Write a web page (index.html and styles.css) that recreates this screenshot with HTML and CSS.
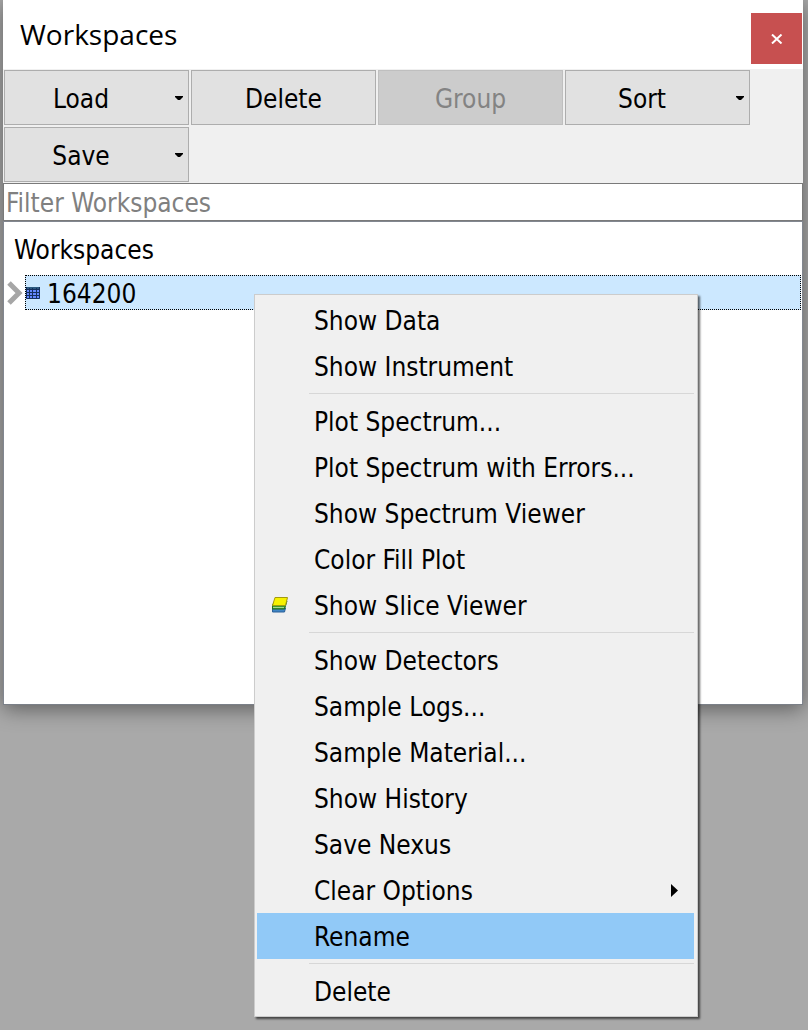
FILE: index.html
```
<!DOCTYPE html>
<html lang="en">
<head>
<meta charset="utf-8">
<title>Workspaces</title>
<link rel="stylesheet" href="styles.css">
</head>
<body>
<main class="window">
  <header class="titlebar">
    <h1 class="title">Workspaces</h1>
    <button class="close" type="button" aria-label="Close">
      <svg width="12" height="10" viewBox="0 0 12 10"><path d="M1 .5 10.500 9.500M10.500 .5 1 9.500" fill="none" stroke="#fff" stroke-width="2"/></svg>
    </button>
  </header>
  <div class="toolbar">
    <button class="tool tool-menu" type="button"><span>Load</span><svg class="caret" viewBox="0 0 8 4"><path d="M0 0h8v1L5 4H3L0 1z"/></svg></button>
    <button class="tool" type="button"><span>Delete</span></button>
    <button class="tool" type="button" disabled><span>Group</span></button>
    <button class="tool tool-menu" type="button"><span>Sort</span><svg class="caret" viewBox="0 0 8 4"><path d="M0 0h8v1L5 4H3L0 1z"/></svg></button>
    <button class="tool tool-menu" type="button"><span>Save</span><svg class="caret" viewBox="0 0 8 4"><path d="M0 0h8v1L5 4H3L0 1z"/></svg></button>
  </div>
  <input class="filter" type="text" placeholder="Filter Workspaces" aria-label="Filter Workspaces">
  <section class="tree">
    <h2 class="tree-head">Workspaces</h2>
    <div class="row">
      <svg class="expander" width="16" height="24" viewBox="0 0 16 24"><path d="M2 2 12 12 2 22" fill="none" stroke="#a6a6a6" stroke-width="5"/></svg>
      <div class="item">
        <svg class="grid-icon" width="14" height="12" viewBox="0 0 14 12"><path fill="#6488ff" d="M0 0h14v12H0z"/><path fill="#2c5a80" d="M0 0h14v2H0z"/><path d="M.5 0v11.500h13V0M3.500 1v11M6.500 1v11M10.500 1v11M0 2.500h14M0 5.500h14M0 8.500h14" fill="none" stroke="#16305e"/></svg>
        <span>164200</span>
      </div>
    </div>
  </section>
</main>
<div class="menu" role="menu">
  <button class="entry" role="menuitem"><span>Show Data</span></button>
  <button class="entry" role="menuitem"><span>Show Instrument</span></button>
  <hr class="rule">
  <button class="entry" role="menuitem"><span>Plot Spectrum...</span></button>
  <button class="entry" role="menuitem"><span>Plot Spectrum with Errors...</span></button>
  <button class="entry" role="menuitem"><span>Show Spectrum Viewer</span></button>
  <button class="entry" role="menuitem"><span>Color Fill Plot</span></button>
  <button class="entry entry-icon" role="menuitem">
    <svg width="18" height="16" viewBox="0 0 18 16"><path d="M1.500 11h13l-1 4h-12z" fill="#3f86c6" stroke="#2a5f97"/><path d="M1.500 8 4 4h12l-2.500 8h-12z" fill="#3d9b2c" stroke="#236b20"/><path d="M2 10.500h11" stroke="#a5d890"/><path d="M4 .5h12.500l-2 8H1.500z" fill="#f7f200" stroke="#a39a10"/></svg>
    <span>Show Slice Viewer</span>
  </button>
  <hr class="rule">
  <button class="entry" role="menuitem"><span>Show Detectors</span></button>
  <button class="entry" role="menuitem"><span>Sample Logs...</span></button>
  <button class="entry" role="menuitem"><span>Sample Material...</span></button>
  <button class="entry" role="menuitem"><span>Show History</span></button>
  <button class="entry" role="menuitem"><span>Save Nexus</span></button>
  <button class="entry entry-sub" role="menuitem"><span>Clear Options</span><svg width="7" height="13" viewBox="0 0 7 13"><path d="M0 0 7 6.500 0 13z"/></svg></button>
  <button class="entry active" role="menuitem"><span>Rename</span></button>
  <hr class="rule">
  <button class="entry" role="menuitem"><span>Delete</span></button>
</div>
</body>
</html>
```
FILE: styles.css
```
* { box-sizing: border-box; }
body {
  margin: 0;
  min-height: 100vh;
  padding: 0 5px 0 3px;
  background: #a9a9a9;
  color: #000;
  font: 26px/34px "DejaVu Sans Condensed", "Noto Sans", sans-serif;
}
button, input { font: inherit; color: inherit; }
.window {
  background: #fff;
  border-bottom: 1px solid #7b8088;
  box-shadow: 0 4px 20px rgba(0, 0, 0, .45);
}
.titlebar {
  display: flex;
  justify-content: space-between;
  align-items: flex-start;
  height: 69px;
  padding: 0 1px 0 17px;
}
.title {
  margin: 16px 0 0;
  font: 28px/36px "Open Sans", sans-serif;
}
.close {
  display: grid;
  place-items: center;
  width: 51px;
  height: 51px;
  margin-top: 13px;
  padding: 0;
  border: 0;
  background: #c75050;
}
.toolbar {
  display: flex;
  flex-wrap: wrap;
  gap: 2px;
  padding: 1px;
  background: #f0f0f0;
}
.tool {
  display: flex;
  align-items: center;
  width: 185px;
  height: 55px;
  padding: 0;
  border: 1px solid #adadad;
  border-radius: 0;
  background: #e1e1e1;
  text-align: center;
}
.tool span { flex: 1; padding-top: 2px; }
.tool:disabled {
  border-color: #bfbfbf;
  background: #ccc;
  color: #838383;
}
.tool-menu { padding: 0 5px 0 18px; }
.tool-menu span { padding-right: 36px; }
.caret { width: 8px; height: 4px; }
.filter {
  display: block;
  width: 100%;
  height: 38px;
  padding: 2px 2px 0;
  border: 1px solid #7a7a7a;
  border-radius: 0;
  background: #fff;
}
.filter::placeholder { color: #808080; opacity: 1; }
.tree {
  min-height: 483px;
  padding: 11px 1px 0 3px;
  border: 1px solid #828790;
  border-bottom: 0;
}
.tree-head { margin: 0 0 8px 7px; font: inherit; }
.row { display: flex; align-items: center; gap: 2px; }
.item {
  display: flex;
  flex: 1;
  align-items: center;
  gap: 7px;
  height: 35px;
  border: 1px dotted #000;
  background: #cce8ff;
}
.item span { padding-top: 2px; }
.menu {
  position: absolute;
  top: 294px;
  left: 254px;
  width: 444px;
  padding: 2px 3px 2px 2px;
  border: 1px solid #ccc;
  background: #f0f0f0;
  box-shadow: 2px 2px 2px rgba(0, 0, 0, .6);
}
.entry {
  display: flex;
  align-items: center;
  width: 100%;
  height: 46px;
  padding: 0 16px 0 57px;
  border: 0;
  background: none;
  text-align: left;
}
.entry span { padding-top: 2px; }
.entry-icon { gap: 25px; padding-left: 14px; }
.entry-sub { justify-content: space-between; }
.active { background: #91c9f7; }
.rule {
  height: 1px;
  margin: 4px 0 4px 52px;
  border: 0;
  background: #d7d7d7;
}
```
